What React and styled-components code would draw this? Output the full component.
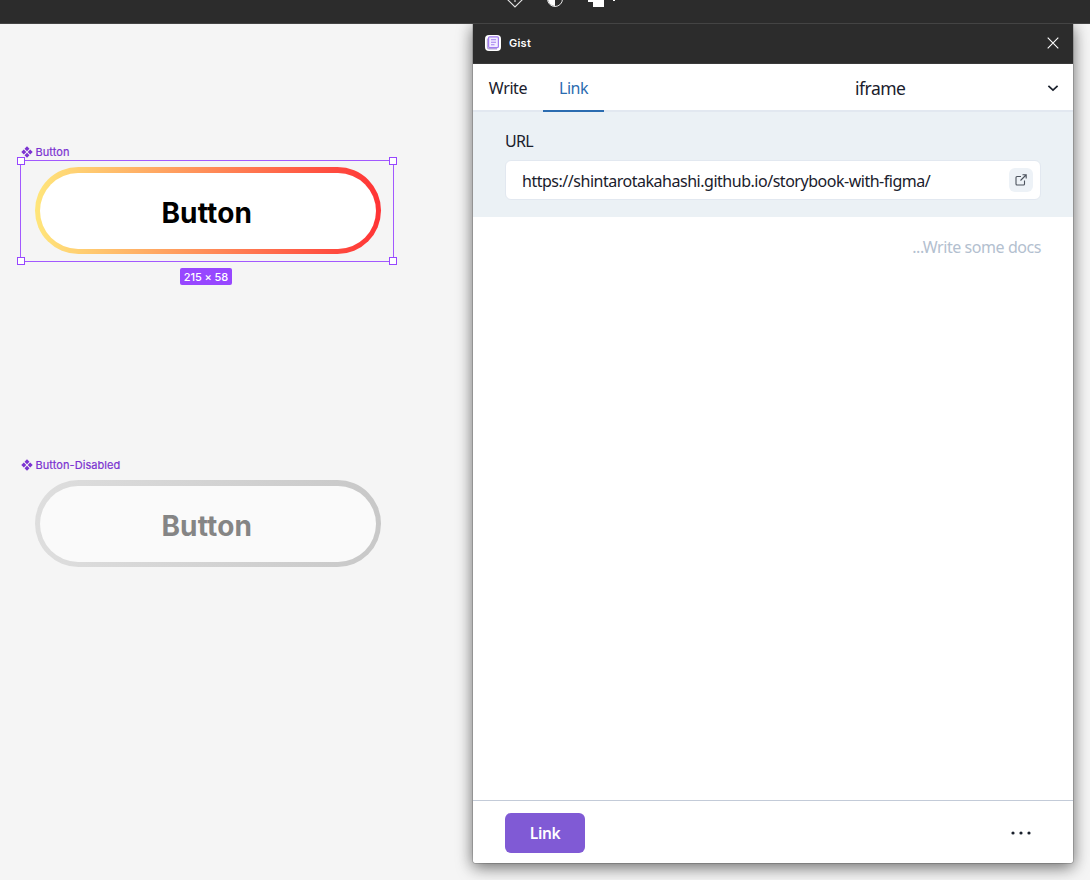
import React from "react";
import styled, { createGlobalStyle } from "styled-components";

const GlobalStyle = createGlobalStyle`
  *, *::before, *::after { box-sizing: border-box; }
  body { margin: 0; background: #f5f5f5; overflow: hidden; }
  button { font: inherit; border: 0; padding: 0; margin: 0; background: none; cursor: pointer; }
`;

const Screen = styled.div`
  position: relative;
  display: flex;
  flex-direction: column;
  width: 1090px;
  height: 880px;
  overflow: hidden;
  background: #f5f5f5;
  font-family: "Noto Sans", "Open Sans", sans-serif;
  color: #1a202c;
`;

const Toolbar = styled.header`
  position: relative;
  z-index: 1;
  flex: none;
  height: 24px;
  background: #2c2c2c;
  border-bottom: 1px solid #444;

  svg { display: block; }
`;

const Canvas = styled.main`
  position: relative;
  flex: 1;
`;

const Node = styled.section`
  position: absolute;
  left: 21px;
  top: ${(p) => p.$top}px;
  width: 374px;
`;

const NodeLabel = styled.div`
  display: flex;
  align-items: center;
  gap: 2.5px;
  height: 16px;
  font: 400 11px/16px Inter, sans-serif;
  letter-spacing: 0.07px;
  color: #7b33d1;
  -webkit-text-stroke: 0.2px #7b33d1;

  svg { flex: none; }
`;

const Pill = styled.div`
  display: flex;
  width: 346px;
  height: 86.5px;
  margin: 7.3px 0 0 14px;
  padding: 5.3px;
  border-radius: 44px;
  background: linear-gradient(90deg, ${(p) => p.$from}, ${(p) => p.$to});
`;

const PillFace = styled.div`
  display: flex;
  align-items: center;
  justify-content: center;
  flex: 1;
  padding: 5px 2.5px 0 0;
  border-radius: 38px;
  background: ${(p) => p.$fill};
  font: 700 28px/36px Inter, sans-serif;
  letter-spacing: 0.15px;
  color: ${(p) => p.$color};
`;

const Selection = styled.div`
  position: absolute;
  left: -1px;
  top: 16px;
  width: 374px;
  height: 102px;
  border: 1px solid #a259ff;
`;

const Handle = styled.i`
  position: absolute;
  width: 8px;
  height: 8px;
  background: #fff;
  border: 1px solid #9747ff;
  ${(p) => p.$y}: -4px;
  ${(p) => p.$x}: -4px;
`;

const SizeBadge = styled.div`
  position: absolute;
  left: 159px;
  top: 124px;
  width: 52px;
  height: 17px;
  border-radius: 2px;
  background: #9747ff;
  color: #fff;
  font: 500 11px/18px Inter, sans-serif;
  letter-spacing: -0.1px;
  text-align: center;
  white-space: nowrap;
`;

const PluginWindow = styled.aside`
  position: absolute;
  left: 473px;
  top: 24px;
  display: flex;
  flex-direction: column;
  width: 600px;
  height: 839px;
  background: #fff;
  border-radius: 0 0 2px 2px;
  box-shadow: 0 5px 17px rgba(0, 0, 0, 0.4), 0 2px 14px rgba(0, 0, 0, 0.25), 0 0 0 0.5px rgba(0, 0, 0, 0.3);
`;

const TitleBar = styled.header`
  display: flex;
  align-items: center;
  flex: none;
  height: 40px;
  padding: 0 13px 2px 12px;
  background: #2c2c2c;
  border-bottom: 1px solid #3a3a3a;
  color: #fff;
`;

const Title = styled.h1`
  flex: 1;
  margin: 0 0 0 8px;
  font: 600 11px/16px Inter, sans-serif;
  letter-spacing: 0.25px;
`;

const IconButton = styled.button`
  display: flex;
  align-items: center;
  justify-content: center;
  color: inherit;
`;

const TabBar = styled.nav`
  display: flex;
  flex: none;
  height: 48px;
  border-bottom: 2px solid #e2e8f0;
`;

const Tab = styled.button`
  height: 48px;
  padding: 2px 0 0;
  width: ${(p) => p.$width}px;
  font-size: 16px;
  letter-spacing: ${(p) => p.$spacing};
  border-bottom: 2px solid ${(p) => (p.$active ? "#2b6cb0" : "transparent")};
  color: ${(p) => (p.$active ? "#2b6cb0" : "#1a202c")};
`;

const Select = styled.div`
  display: flex;
  align-items: center;
  justify-content: space-between;
  width: 205px;
  margin-left: auto;
  margin-right: 13px;
  padding-top: 1px;
  height: 46px;
  font-size: 17.5px;
  letter-spacing: -0.5px;
`;

const UrlSection = styled.section`
  flex: none;
  height: 105px;
  padding: 17px 32px 0;
  background: #ebf1f5;
`;

const FieldLabel = styled.label`
  display: block;
  height: 31px;
  font-size: 16px;
  line-height: 24px;
  letter-spacing: -0.75px;
`;

const UrlField = styled.div`
  display: flex;
  align-items: center;
  justify-content: space-between;
  height: 40px;
  padding: 0 7px 0 16px;
  border: 1px solid #e2e8f0;
  border-radius: 6px;
  background: #fff;
  font-size: 16px;
  line-height: 24px;
  white-space: nowrap;
`;

const UrlText = styled.span`
  letter-spacing: -0.48px;
  padding-top: 2px;
`;

const OpenButton = styled(IconButton)`
  width: 24px;
  height: 24px;
  flex: none;
  border-radius: 6px;
  background: #edf2f7;
`;

const Editor = styled.div`
  flex: 1;
  padding: 18px 32px;
  text-align: right;
  font-size: 16px;
  line-height: 24px;
  letter-spacing: -0.44px;
  color: #b3c0cf;
`;

const Footer = styled.footer`
  display: flex;
  align-items: center;
  justify-content: space-between;
  flex: none;
  height: 63px;
  padding: 2px 42px 0 32px;
  border-top: 1px solid #c3cbd8;
`;

const PrimaryButton = styled.button`
  width: 80px;
  height: 40px;
  border-radius: 6px;
  background: #805ad5;
  color: #fff;
  font-size: 15.5px;
  font-weight: 600;
  letter-spacing: -0.4px;
`;

const ComponentIcon = () => (
  <svg width="12" height="12" viewBox="0 0 12 12" fill="#7b33d1">
    <path d="M6 .3 8.5 2.8 6 5.3 3.5 2.8zM6 6.7l2.5 2.5L6 11.7 3.5 9.2zM2.8 3.5 5.3 6 2.8 8.5.3 6zM9.2 3.5 11.7 6 9.2 8.5 6.7 6z" />
  </svg>
);

const GistIcon = () => (
  <svg width="16" height="16" viewBox="0 0 16 16">
    <rect width="16" height="16" rx="4" fill="#fff" />
    <path d="M2.5 3.5v8.7c0 1 .7 1.5 1.5 1.5h8" fill="none" stroke="#b7a8d8" strokeWidth="1.4" />
    <rect x="3.6" y="1.8" width="9.8" height="10.8" rx="1" fill="#f2edff" stroke="#a27cf0" strokeWidth="1.2" />
    <path d="M6 4.7h5M6 7.2h5M6 9.7h3.5" stroke="#a27cf0" strokeWidth="1.1" />
  </svg>
);

const ToolbarIcons = () => (
  <svg width="1090" height="23" viewBox="0 0 1090 23" fill="none">
    <path d="M507 -1 515 7 523 -1M515 -2V2" stroke="#e5e5e5" strokeWidth="1.1" />
    <circle cx="555" cy="-1" r="7.5" stroke="#e5e5e5" />
    <path d="M555 -8a7 7 0 0 0 0 14z" fill="#fff" />
    <path d="M588 -8h12V0h4v7h-11V2h-5z" fill="#fff" />
    <path d="m611 -2 3 3 3-3" stroke="#fff" />
  </svg>
);

const OpenIcon = () => (
  <svg width="12" height="12" viewBox="0 0 12 12" fill="none" stroke="#4c535e" strokeWidth="1.1">
    <path d="M6 2.5H2a1 1 0 0 0-1 1V10a1 1 0 0 0 1 1h6.5a1 1 0 0 0 1-1V6.5M5.5 6.5l5.5-5.5M7.5.8h3.7v3.7" />
  </svg>
);

const CloseIcon = () => (
  <svg width="14" height="14" viewBox="0 0 14 14" fill="none" stroke="#fff" strokeWidth="1.1">
    <path d="m1.7 1.7 10.6 10.6M12.3 1.7 1.7 12.3" />
  </svg>
);

const ChevronIcon = () => (
  <svg width="14" height="14" viewBox="0 0 14 14" fill="none" stroke="#1a202c" strokeWidth="1.7">
    <path d="m2.4 4.8 4.6 4.3 4.6-4.3" />
  </svg>
);

const DotsIcon = () => (
  <svg width="20" height="6" viewBox="0 0 20 6" fill="#1a202c">
    <circle cx="2" cy="3" r="1.6" />
    <circle cx="10" cy="3" r="1.6" />
    <circle cx="18" cy="3" r="1.6" />
  </svg>
);

export default function App() {
  return (
    <Screen>
      <GlobalStyle />
      <Toolbar><ToolbarIcons /></Toolbar>
      <Canvas>
        <Node $top={120}>
          <NodeLabel><ComponentIcon />Button</NodeLabel>
          <Pill $from="#ffe67b" $to="#ff3335">
            <PillFace $fill="#fff" $color="#000">Button</PillFace>
          </Pill>
          <Selection>
            <Handle $x="left" $y="top" />
            <Handle $x="right" $y="top" />
            <Handle $x="left" $y="bottom" />
            <Handle $x="right" $y="bottom" />
          </Selection>
          <SizeBadge>215 × 58</SizeBadge>
        </Node>
        <Node $top={433}>
          <NodeLabel><ComponentIcon />Button-Disabled</NodeLabel>
          <Pill $from="#dedede" $to="#c8c8c8">
            <PillFace $fill="#fafafa" $color="#858585">Button</PillFace>
          </Pill>
        </Node>
      </Canvas>
      <PluginWindow>
        <TitleBar>
          <GistIcon />
          <Title>Gist</Title>
          <IconButton aria-label="Close"><CloseIcon /></IconButton>
        </TitleBar>
        <TabBar>
          <Tab $width={70} $spacing="-0.4px">Write</Tab>
          <Tab $width={61} $spacing="-0.5px" $active>Link</Tab>
          <Select>iframe<ChevronIcon /></Select>
        </TabBar>
        <UrlSection>
          <FieldLabel>URL</FieldLabel>
          <UrlField>
            <UrlText>https://shintarotakahashi.github.io/storybook-with-figma/</UrlText>
            <OpenButton aria-label="Open link"><OpenIcon /></OpenButton>
          </UrlField>
        </UrlSection>
        <Editor>...Write some docs</Editor>
        <Footer>
          <PrimaryButton>Link</PrimaryButton>
          <IconButton aria-label="More"><DotsIcon /></IconButton>
        </Footer>
      </PluginWindow>
    </Screen>
  );
}
